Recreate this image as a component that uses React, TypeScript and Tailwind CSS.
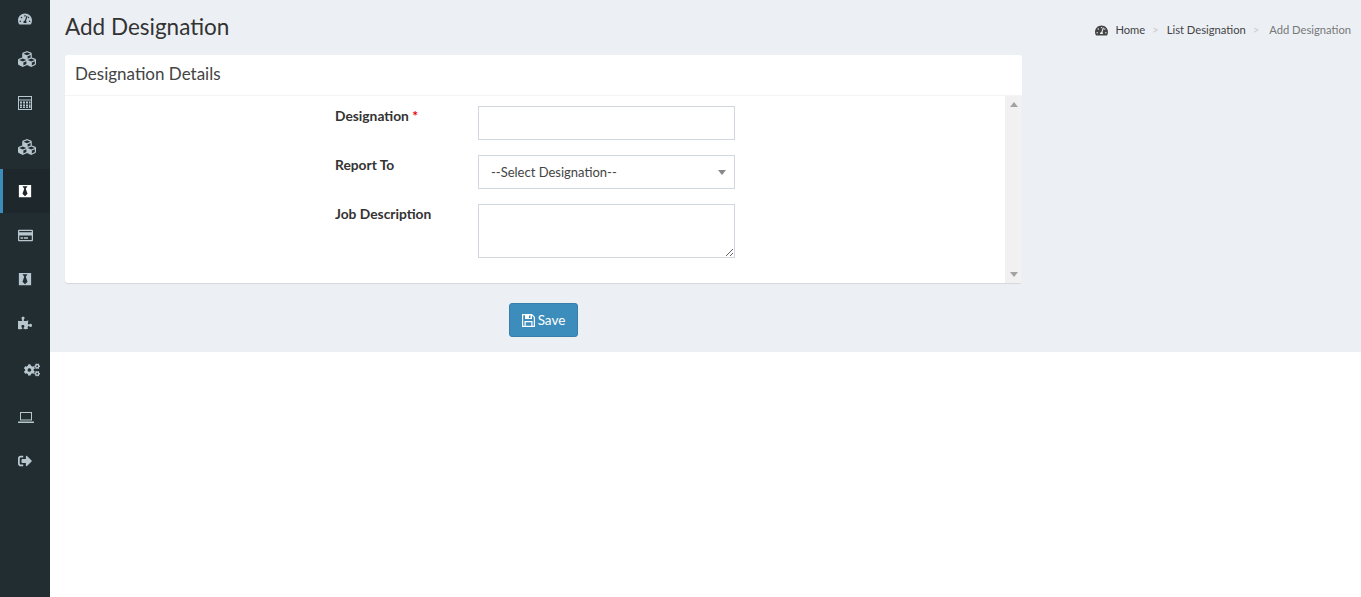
import type { ReactNode } from 'react';
import {
  FaBlackTie,
  FaCogs,
  FaCubes,
  FaPuzzlePiece,
  FaRegCreditCard,
  FaSignOutAlt,
  FaTachometerAlt,
} from 'react-icons/fa';

function CalculatorIcon() {
  return (
    <svg width="14" height="14" viewBox="0 0 14 14" fill="currentColor">
      <path d="M0 0h14v14H0zM1 1v2.500h12V1zM1 4.500V13h12V4.500z" fillRule="evenodd" />
      <path d="M2 5.500h2v2H2zM5 5.500h2v2H5zM8 5.500h2v2H8zM11 5.500h1.500v2H11zM2 8.500h2v1.500H2zM5 8.500h2v1.500H5zM8 8.500h2v1.500H8zM11 8.500h1.500v3.500H11zM2 10.500h2v1.500H2zM5 10.500h2v1.500H5zM8 10.500h2v1.500H8z" />
    </svg>
  );
}

function LaptopIcon() {
  return (
    <svg width="16" height="11" viewBox="0 0 16 11" fill="currentColor">
      <path d="M2 0h12v8.500H2zM3 1v6.500h10V1z" fillRule="evenodd" />
      <path d="M0 9.500h16V10.500a.5.500 0 0 1-.5.500H.5a.5.500 0 0 1-.5-.5z" />
    </svg>
  );
}

function SaveIcon() {
  return (
    <svg width="13" height="13" viewBox="0 0 13 13" fill="currentColor">
      <path
        fillRule="evenodd"
        d="M0 .5A.5.500 0 0 1 .5 0H10l3 3v9.500a.5.500 0 0 1-.5.500H.5a.5.500 0 0 1-.5-.5zM1.200 1.200v10.600H2.500V7h8v4.800h1.300V3.500L10 1.600v3.400H3V1.200zM3.700 8.200v3.600h5.600V8.200zM7 1.500v2.500h1.500V1.500z"
      />
    </svg>
  );
}

const navItems: { icon: ReactNode; height: string; active?: boolean; shift?: string }[] = [
  { icon: <FaTachometerAlt className="text-[14px]" />, height: 'h-[37px]' },
  { icon: <FaCubes className="text-[18px]" />, height: 'h-[44px]' },
  { icon: <CalculatorIcon />, height: 'h-[44px]' },
  { icon: <FaCubes className="text-[18px]" />, height: 'h-[44px]' },
  { icon: <FaBlackTie className="text-white" />, height: 'h-[44px]', active: true },
  { icon: <FaRegCreditCard className="text-[15px]" />, height: 'h-[44px]' },
  { icon: <FaBlackTie />, height: 'h-[44px]' },
  { icon: <FaPuzzlePiece />, height: 'h-[44px]' },
  { icon: <FaCogs className="text-[16px]" />, height: 'h-[50px]', shift: 'pl-[24px]' },
  { icon: <LaptopIcon />, height: 'h-[44px]' },
  { icon: <FaSignOutAlt />, height: 'h-[44px]' },
];

function Sidebar() {
  return (
    <aside className="w-[50px] shrink-0 bg-[#222d32] text-[#b8c7ce] text-[14px]">
      {navItems.map((item, i) => (
        <div
          key={i}
          className={`flex items-center ${item.height} ${item.shift ?? 'pl-[18px]'} ${
            item.active ? 'bg-[#1e282c] border-l-[3px] border-[#3c8dbc] !pl-[15px]' : ''
          }`}
        >
          {item.icon}
        </div>
      ))}
    </aside>
  );
}

function Field({ label, required, children }: { label: string; required?: boolean; children: ReactNode }) {
  return (
    <div className="flex mb-[15px]">
      <label className="w-[143px] shrink-0 font-bold text-[13.800px] leading-5 text-[#333]">
        {label} {required && <span className="text-red-600">*</span>}
      </label>
      {children}
    </div>
  );
}

export default function App() {
  return (
    <div className="flex min-h-[597px] bg-white font-['Lato',sans-serif] text-[14px] text-[#333]">
      <Sidebar />
      <main className="flex-1 h-[352px] bg-[#ecf0f5] pl-[15px] pr-[10px]">
        <div className="flex items-start justify-between h-[55px]">
          <h1 className="mt-[10px] text-[22.500px] leading-[34px] text-[#333]">Add Designation</h1>
          <ol className="flex items-center mt-[22px] text-[11.200px] leading-4 text-[#444]">
            <li className="flex items-center">
              <FaTachometerAlt className="mr-[7px] text-[13px]" />
              Home
            </li>
            <li className="pl-[7px] pr-[8px] text-[#ccc]">&gt;</li>
            <li>List Designation</li>
            <li className="pl-[7px] pr-[10px] text-[#ccc]">&gt;</li>
            <li className="text-[#777]">Add Designation</li>
          </ol>
        </div>

        <section className="w-[957px] h-[228px] bg-white rounded-[3px] shadow-[0_1px_1px_rgba(0,0,0,0.1)]">
          <header className="h-[41px] px-[10px] pb-[3px] flex items-center border-b border-[#f4f4f4]">
            <h3 className="text-[17px] leading-[36px] text-[#444]">Designation Details</h3>
          </header>
          <div className="flex h-[187px]">
            <form className="flex-1 pt-[10px] pl-[270px]">
              <Field label="Designation" required>
                <input type="text" className="w-[257px] h-[34px] border border-[#d2d6de] bg-white outline-none" />
              </Field>
              <Field label="Report To">
                <div className="relative w-[257px] h-[34px]">
                  <select className="w-full h-full appearance-none border border-[#d2d6de] bg-white pl-[12px] pt-[2px] text-[13px] text-[#444] outline-none">
                    <option>--Select Designation--</option>
                  </select>
                  <span className="absolute right-[9px] top-[15px] border-x-[4px] border-t-[5px] border-x-transparent border-t-[#888]" />
                </div>
              </Field>
              <Field label="Job Description">
                <textarea className="block w-[257px] h-[54px] border border-[#d2d6de] bg-white outline-none" />
              </Field>
            </form>
            <div className="w-[17px] bg-[#f1f1f1] flex flex-col items-center justify-between py-[6px]">
              <span className="border-x-[4px] border-b-[5px] border-x-transparent border-b-[#a3a3a3]" />
              <span className="border-x-[4px] border-t-[5px] border-x-transparent border-t-[#a3a3a3]" />
            </div>
          </div>
        </section>

        <div className="w-[957px] flex justify-center mt-[20px]">
          <button
            type="button"
            className="flex items-center gap-[3px] h-[34px] w-[69px] justify-center rounded-[3px] border border-[#367fa9] bg-[#3c8dbc] text-[13.500px] text-white"
          >
            <SaveIcon />
            Save
          </button>
        </div>
      </main>
    </div>
  );
}
